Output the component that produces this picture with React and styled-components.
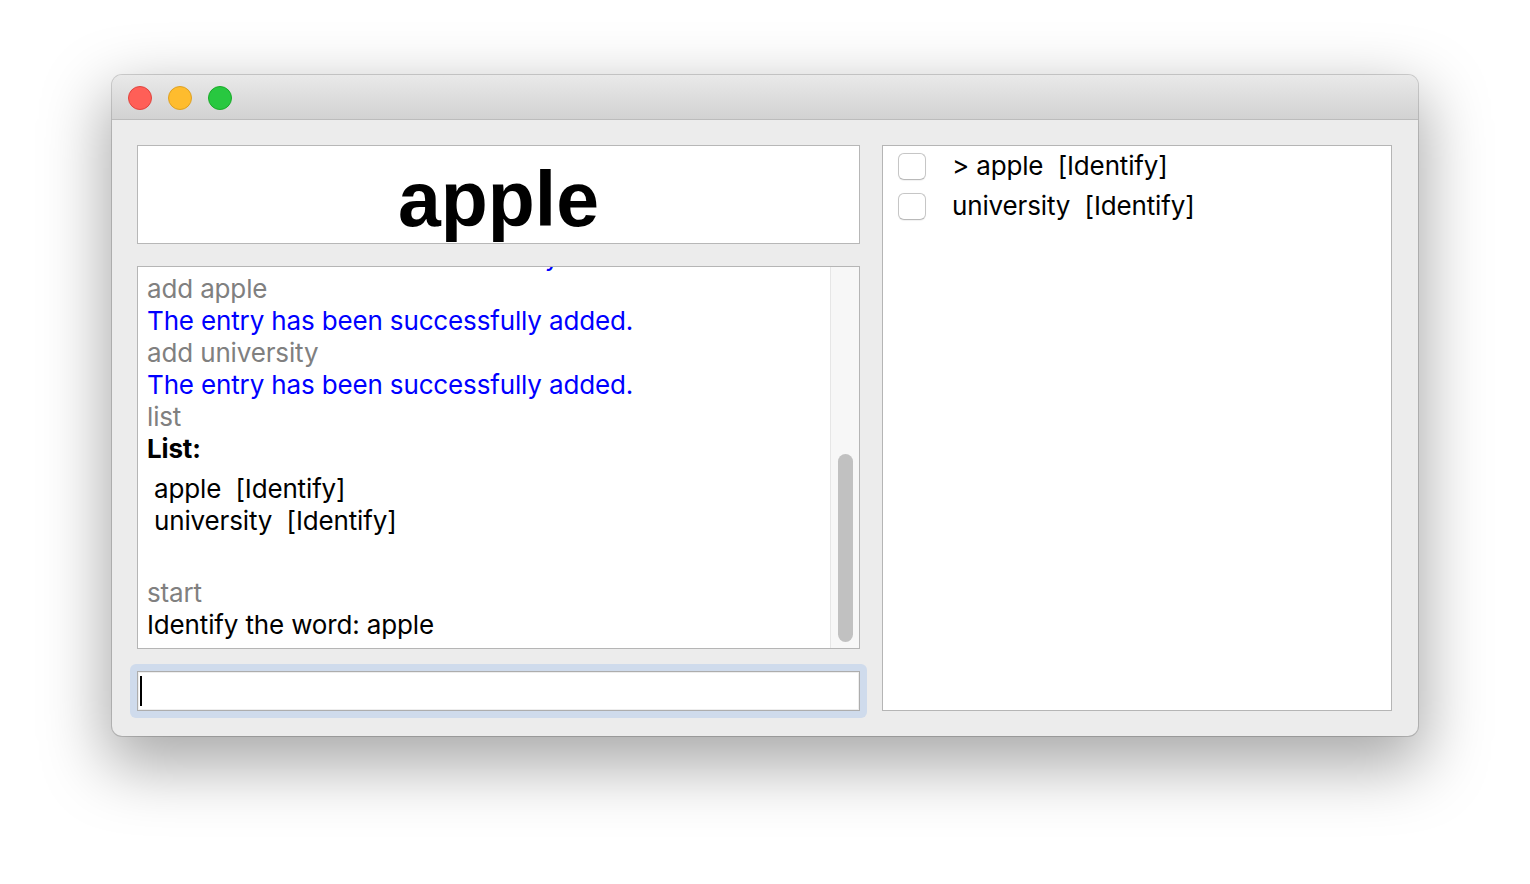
import React from "react";
import styled, { createGlobalStyle } from "styled-components";

const GlobalStyle = createGlobalStyle`
  html, body {
    margin: 0;
    padding: 0;
    background: #ffffff;
  }
  body {
    font-family: Inter, "Liberation Sans", Arial, sans-serif;
    -webkit-font-smoothing: antialiased;
  }
  * { box-sizing: border-box; }
`;

const Page = styled.div`
  width: 1530px;
  height: 884px;
  overflow: hidden;
  padding: 75px 0 0 112px;
  background: #ffffff;
`;

const Window = styled.div`
  width: 1306px;
  height: 661px;
  border-radius: 10px;
  overflow: hidden;
  background: #ececec;
  display: flex;
  flex-direction: column;
  box-shadow: 0 0 0 1px rgba(0, 0, 0, 0.16), 0 24px 64px 6px rgba(0, 0, 0, 0.34);
`;

const TitleBar = styled.div`
  flex-shrink: 0;
  height: 45px;
  padding: 2px 0 0 16px;
  display: flex;
  align-items: center;
  gap: 16px;
  background: linear-gradient(#e9e9e9, #d2d2d2);
  border-bottom: 1px solid #bcbcbc;
`;

const Light = styled.span`
  width: 24px;
  height: 24px;
  border-radius: 50%;
  background: ${(p) => p.$fill};
  border: 1px solid ${(p) => p.$edge};
`;

const Body = styled.div`
  flex: 1;
  min-height: 0;
  display: grid;
  grid-template-columns: 723px 510px;
  column-gap: 22px;
  padding: 25px 26px 25px 25px;
`;

const LeftColumn = styled.div`
  display: flex;
  flex-direction: column;
  gap: 22px;
  min-height: 0;
`;

const WordPanel = styled.div`
  flex-shrink: 0;
  height: 99px;
  background: #ffffff;
  border: 1px solid #b7b7b7;
  display: flex;
  align-items: center;
  justify-content: center;
  padding-top: 9px;
`;

const WordTitle = styled.div`
  font-family: "Liberation Sans", Arial, sans-serif;
  font-weight: 700;
  font-size: 77px;
  line-height: 1;
  color: #000000;
`;

const LogPanel = styled.div`
  flex: 1;
  min-height: 0;
  display: flex;
  background: #ffffff;
  border: 1px solid #b5b5b5;
`;

const LogViewport = styled.div`
  flex: 1;
  min-width: 0;
  overflow: hidden;
  display: flex;
  flex-direction: column;
  justify-content: flex-end;
  padding: 0 0 7px 9px;
`;

const ScrollTrack = styled.div`
  flex-shrink: 0;
  width: 29px;
  background: #f7f7f7;
  border-left: 1px solid #e6e6e6;
  display: flex;
  flex-direction: column;
  justify-content: flex-end;
  padding: 6px 6px 6px 7px;
`;

const ScrollThumb = styled.div`
  height: ${(p) => p.$length}px;
  border-radius: 8px;
  background: #c1c1c1;
`;

const tones = {
  input: "color: #808080; font-weight: 400;",
  reply: "color: #0000ff; font-weight: 400;",
  plain: "color: #000000; font-weight: 400;",
  heading: "color: #000000; font-weight: 700;",
};

const Line = styled.div`
  flex-shrink: 0;
  font-size: 26px;
  letter-spacing: -0.15px;
  line-height: 32px;
  white-space: pre;
  ${(p) => tones[p.$tone || "plain"]}
`;

const ListBlock = styled.div`
  flex-shrink: 0;
  padding: 8px 0 8px 7px;
`;

const BlankLine = styled.div`
  flex-shrink: 0;
  height: 32px;
`;

const FocusRing = styled.div`
  flex-shrink: 0;
  margin: -7px -7px -7px -7px;
  padding: 7px;
  border-radius: 6px;
  background: #cfdbec;
`;

const TextField = styled.div`
  height: 40px;
  background: #ffffff;
  border: 1px solid #adadad;
  box-shadow: inset 0 0 0 1px #eeeeee;
  display: flex;
  align-items: center;
  padding-left: 2px;
`;

const Caret = styled.span`
  width: 2px;
  height: 30px;
  background: #000000;
`;

const WordListPanel = styled.div`
  background: #ffffff;
  border: 1px solid #b5b5b5;
  display: flex;
  flex-direction: column;
`;

const WordRow = styled.div`
  height: 40px;
  display: flex;
  align-items: center;
  gap: 26px;
  padding-left: 15px;
`;

const CheckBox = styled.span`
  width: 28px;
  height: 27px;
  border-radius: 6px;
  background: #ffffff;
  border: 1px solid #c6c6c6;
  border-bottom-color: #b9b9b9;
  box-shadow: 0 0.5px 1px rgba(0, 0, 0, 0.06);
`;

const WordLabel = styled.span`
  font-size: 26px;
  letter-spacing: -0.15px;
  line-height: 32px;
  color: #000000;
  white-space: pre;
`;

const history = [
  { tone: "reply", text: "The items have been successfully cleared." },
  { tone: "input", text: "add apple" },
  { tone: "reply", text: "The entry has been successfully added." },
  { tone: "input", text: "add university" },
  { tone: "reply", text: "The entry has been successfully added." },
  { tone: "input", text: "list" },
  { tone: "heading", text: "List:" },
  { list: ["apple  [Identify]", "university  [Identify]"] },
  { blank: true },
  { tone: "input", text: "start" },
  { tone: "plain", text: "Identify the word: apple" },
];

const words = [
  { label: "> apple  [Identify]" },
  { label: "university  [Identify]" },
];

export default function App() {
  return (
    <>
      <GlobalStyle />
      <Page>
        <Window>
          <TitleBar>
            <Light $fill="#ff5f57" $edge="#e0443e" />
            <Light $fill="#febc2e" $edge="#dea123" />
            <Light $fill="#28c840" $edge="#1aab29" />
          </TitleBar>
          <Body>
            <LeftColumn>
              <WordPanel>
                <WordTitle>apple</WordTitle>
              </WordPanel>
              <LogPanel>
                <LogViewport>
                  {history.map((entry, i) => {
                    if (entry.blank) return <BlankLine key={i} />;
                    if (entry.list)
                      return (
                        <ListBlock key={i}>
                          {entry.list.map((item) => (
                            <Line key={item}>{item}</Line>
                          ))}
                        </ListBlock>
                      );
                    return (
                      <Line key={i} $tone={entry.tone}>
                        {entry.text}
                      </Line>
                    );
                  })}
                </LogViewport>
                <ScrollTrack>
                  <ScrollThumb $length={188} />
                </ScrollTrack>
              </LogPanel>
              <FocusRing>
                <TextField>
                  <Caret />
                </TextField>
              </FocusRing>
            </LeftColumn>
            <WordListPanel>
              {words.map((w) => (
                <WordRow key={w.label}>
                  <CheckBox />
                  <WordLabel>{w.label}</WordLabel>
                </WordRow>
              ))}
            </WordListPanel>
          </Body>
        </Window>
      </Page>
    </>
  );
}
